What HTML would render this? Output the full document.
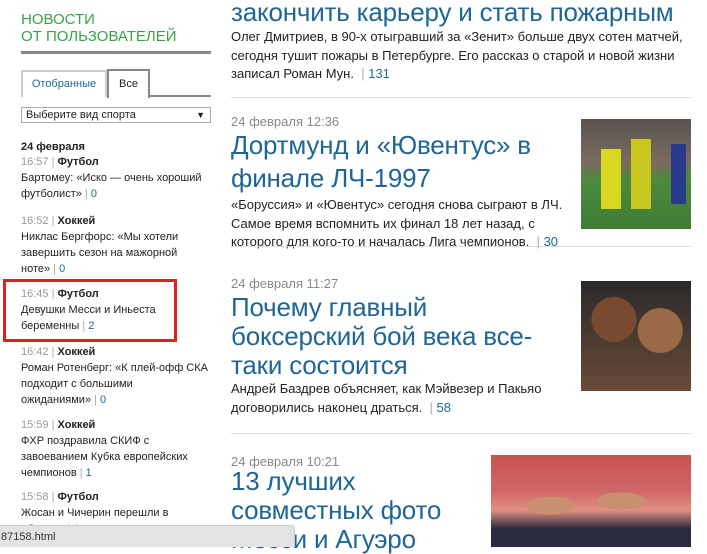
<!DOCTYPE html>
<html><head><meta charset="utf-8"><style>
*{margin:0;padding:0;box-sizing:border-box}
body{width:707px;height:547px;overflow:hidden;background:#fff;font-family:"Liberation Sans",Arial,sans-serif;position:relative;color:#222}
.abs{position:absolute}
.h{color:#1f6695;font-size:26px;line-height:33px;letter-spacing:-0.2px;white-space:nowrap}
.d{color:#888;font-size:13px}
.t{font-size:13px;line-height:18.5px;color:#222;white-space:nowrap}
.n{color:#1f6695}
.sep{height:1px;background:#ddd;left:231px;width:460px}
.li{font-size:11px;line-height:16px;color:#222;left:21px;white-space:nowrap}
.li .tm{color:#999}
.li b{color:#222}
.li .c{color:#1f6695}
.li .p{color:#aaa}
</style></head><body>
<div class="abs" style="left:21px;top:11px;color:#3aa14a;font-size:15px;line-height:17px">НОВОСТИ<br>ОТ ПОЛЬЗОВАТЕЛЕЙ</div>
<div class="abs" style="left:21px;top:51px;width:190px;height:3px;background:#888"></div>
<div class="abs" style="left:21px;top:70px;width:86px;height:27px;border:2px solid #ccc;border-bottom:none;font-size:11px;color:#1f6695;text-align:center;line-height:24px">Отобранные</div>
<div class="abs" style="left:107px;top:69px;width:43px;height:29px;border:2px solid #888;border-bottom:none;background:#fff;font-size:11px;text-align:center;line-height:26px">Все</div>
<div class="abs" style="left:149px;top:95px;width:62px;height:2px;background:#888"></div>
<div class="abs" style="left:21px;top:107px;width:190px;height:16px;border:1px solid #aaa;font-size:11px;line-height:14px;padding-left:4px">Выберите вид спорта<span style="position:absolute;right:5px;font-size:9px">▼</span></div>
<div class="abs li" style="top:139px;font-weight:bold">24 февраля</div>
<div class="abs li" style="top:154px"><span class="tm">16:57</span> <span class="p">|</span> <b>Футбол</b><br>Бартомеу: «Иско — очень хороший<br>футболист» <span class="p">|</span> <span class="c">0</span></div>
<div class="abs li" style="top:213px"><span class="tm">16:52</span> <span class="p">|</span> <b>Хоккей</b><br>Никлас Бергфорс: «Мы хотели<br>завершить сезон на мажорной<br>ноте» <span class="p">|</span> <span class="c">0</span></div>
<div class="abs li" style="top:286px"><span class="tm">16:45</span> <span class="p">|</span> <b>Футбол</b><br>Девушки Месси и Иньеста<br>беременны <span class="p">|</span> <span class="c">2</span></div>
<div class="abs" style="left:3px;top:279px;width:174px;height:63px;border:3px solid #e31e24"></div>
<div class="abs li" style="top:344px"><span class="tm">16:42</span> <span class="p">|</span> <b>Хоккей</b><br>Роман Ротенберг: «К плей-офф СКА<br>подходит с большими<br>ожиданиями» <span class="p">|</span> <span class="c">0</span></div>
<div class="abs li" style="top:417px"><span class="tm">15:59</span> <span class="p">|</span> <b>Хоккей</b><br>ФХР поздравила СКИФ с<br>завоеванием Кубка европейских<br>чемпионов <span class="p">|</span> <span class="c">1</span></div>
<div class="abs li" style="top:489px"><span class="tm">15:58</span> <span class="p">|</span> <b>Футбол</b><br>Жосан и Чичерин перешли в<br>«Сокол» <span class="p">|</span> <span class="c">1</span></div>

<div class="abs h" style="left:231px;top:-4px">закончить карьеру и стать пожарным</div>
<div class="abs t" style="left:231px;top:28px">Олег Дмитриев, в 90-х отыгравший за «Зенит» больше двух сотен матчей,<br>сегодня тушит пожары в Петербурге. Его рассказ о старой и новой жизни<br>записал Роман Мун. &nbsp;<span style="color:#aaa">|</span> <span class="n">131</span></div>
<div class="abs sep" style="top:97px"></div>

<div class="abs d" style="left:231px;top:114px">24 февраля 12:36</div>
<div class="abs h" style="left:231px;top:129px">Дортмунд и «Ювентус» в<br>финале ЛЧ-1997</div>
<div class="abs t" style="left:231px;top:196px">«Боруссия» и «Ювентус» сегодня снова сыграют в ЛЧ.<br>Самое время вспомнить их финал 18 лет назад, с<br>которого для кого-то и началась Лига чемпионов. &nbsp;<span style="color:#aaa">|</span> <span class="n">30</span></div>
<div class="abs" style="left:581px;top:119px;width:110px;height:110px;background:linear-gradient(180deg,#5a5450 0%,#7a6a60 40%,#4c8a3e 55%,#3f7d35 100%)">
<div class="abs" style="left:20px;top:30px;width:20px;height:60px;background:#d8d820"></div>
<div class="abs" style="left:50px;top:20px;width:20px;height:70px;background:#c8c820"></div>
<div class="abs" style="left:90px;top:25px;width:15px;height:60px;background:#2a3a8a"></div></div>
<div class="abs sep" style="top:246px"></div>

<div class="abs d" style="left:231px;top:276px">24 февраля 11:27</div>
<div class="abs h" style="left:231px;top:293px;line-height:29px">Почему главный<br>боксерский бой века все-<br>таки состоится</div>
<div class="abs t" style="left:231px;top:380px">Андрей Баздрев объясняет, как Мэйвезер и Пакьяо<br>договорились наконец драться. &nbsp;<span style="color:#aaa">|</span> <span class="n">58</span></div>
<div class="abs" style="left:581px;top:281px;width:110px;height:110px;background:radial-gradient(circle at 30% 35%,#7a4a30 0 22px,transparent 23px),radial-gradient(circle at 72% 45%,#9a6a48 0 22px,transparent 23px),linear-gradient(180deg,#2a2a2a,#6a4a38)"></div>
<div class="abs sep" style="top:433px"></div>

<div class="abs d" style="left:231px;top:454px">24 февраля 10:21</div>
<div class="abs h" style="left:231px;top:467px;line-height:29px">13 лучших<br>совместных фото<br>Месси и Агуэро</div>
<div class="abs" style="left:491px;top:455px;width:200px;height:92px;background:radial-gradient(ellipse at 30% 55%,#c89070 0 24px,transparent 25px),radial-gradient(ellipse at 65% 50%,#c89070 0 24px,transparent 25px),linear-gradient(180deg,#c85050 0%,#d06868 40%,#e09080 60%,#2a2a40 80%)"></div>

<div class="abs" style="left:0;top:525px;width:295px;height:22px;background:#e3e3e3;border-top-right-radius:4px;font-size:11px;line-height:22px;color:#333;padding-left:1px;border:1px solid #ccc;border-left:none;border-bottom:none">87158.html</div>
</body></html>
